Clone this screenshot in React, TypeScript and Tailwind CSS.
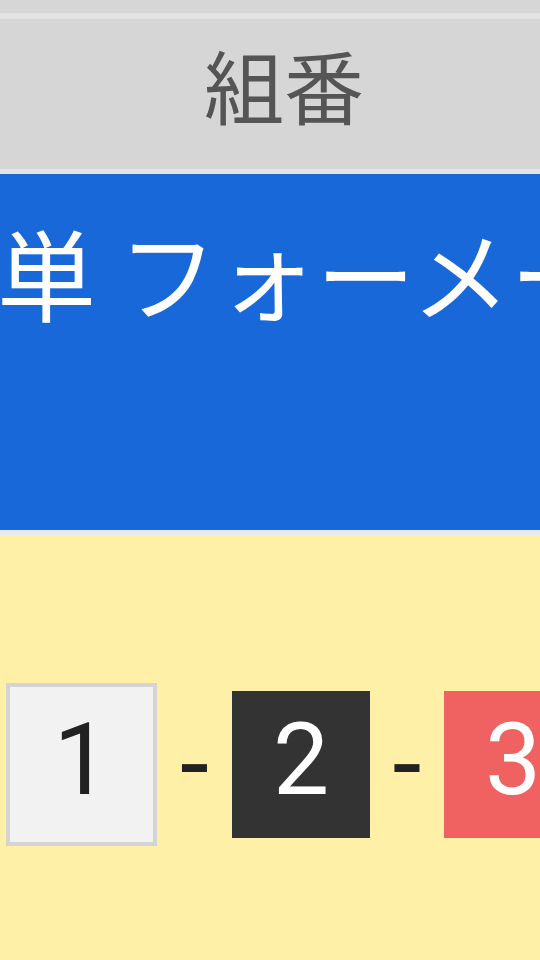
export default function App() {
  const jp = { fontFamily: '"Noto Sans CJK JP", "Noto Sans", sans-serif' };
  const num = { fontFamily: 'Roboto, "Noto Sans", sans-serif' };
  return (
    <div className="w-[540px] h-[960px] overflow-hidden bg-[#fef0a6]" style={jp}>
      {/* previous row edge */}
      <div className="h-[13px] bg-[#d6d6d6]" />
      {/* header */}
      <div className="h-[161px] bg-[#d6d6d6] border-t-[6px] border-b-[5px] border-[#e3e3e3] flex items-center justify-center pl-[28px] pb-[22px]">
        <span className="text-[80px] leading-none text-[#555555]">組番</span>
      </div>
      {/* bet type */}
      <div className="h-[361px] bg-[#1868d9] border-b-[5px] border-[#e6e9ee] overflow-hidden pt-[38px]">
        <div className="whitespace-nowrap text-white text-[99px] leading-[1.2] -ml-[3px]">
          単 フォーメーション
        </div>
      </div>
      {/* combination */}
      <div className="flex items-center pl-[6px] pt-[148px]" style={num}>
        <div className="w-[151px] h-[163px] shrink-0 bg-[#f2f2f2] border-[4px] border-[#d4d4d4] flex items-center justify-center pb-[10px] text-[100px] leading-none text-[#222222]">
          1
        </div>
        <span className="w-[75px] shrink-0 text-center text-[105px] leading-none text-[#222222]">-</span>
        <div className="w-[138px] h-[147px] shrink-0 bg-[#333333] flex items-center justify-center pb-[10px] text-[100px] leading-none text-white">
          2
        </div>
        <span className="w-[74px] shrink-0 text-center text-[105px] leading-none text-[#222222]">-</span>
        <div className="w-[138px] h-[147px] shrink-0 bg-[#f06262] flex items-center justify-center pb-[10px] text-[100px] leading-none text-white">
          3
        </div>
      </div>
    </div>
  );
}
